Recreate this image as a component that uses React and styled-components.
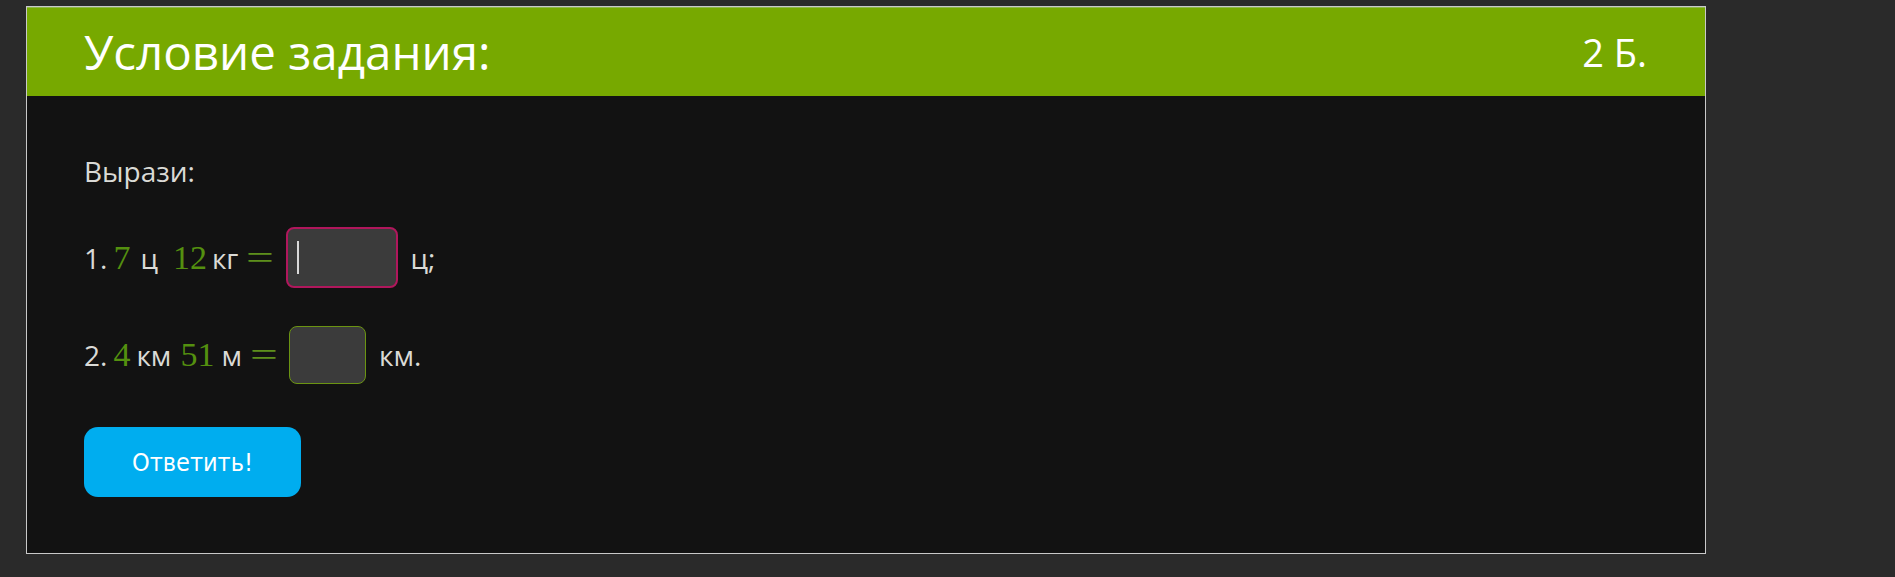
import React from 'react';
import styled, { createGlobalStyle } from 'styled-components';

const GlobalStyle = createGlobalStyle`
    body {
        margin: 0;
        background: #2a2a2a;
        font-family: "Open Sans", "Noto Sans", sans-serif;
    }
`;

const Page = styled.div`
    padding: 6px 0 24px 26px;
`;

const Card = styled.div`
    width: 1680px;
    box-sizing: border-box;
    border: 1px solid #c9c9c9;
    background: #121212;
`;

const Header = styled.div`
    height: 88px;
    padding: 0 58px 0 57px;
    display: flex;
    align-items: center;
    justify-content: space-between;
    background: #77a900;
    color: #ffffff;
    border-top: 1px solid #8fb84a;
`;

const Title = styled.div`
    font-size: 47.5px;
    line-height: 1;
`;

const Points = styled.div`
    font-size: 38px;
    line-height: 1;
`;

const Body = styled.div`
    padding: 54px 57px 56px 57px;
    display: flex;
    flex-direction: column;
    align-items: flex-start;
    color: #dadad6;
    font-size: 28px;
    line-height: 42px;
`;

const Prompt = styled.div`
    margin-bottom: ${props => props.$gap || 0}px;
`;

const Row = styled.div`
    display: flex;
    align-items: center;
    white-space: pre;
    margin-bottom: ${props => props.$gap || 0}px;
`;

const Text = styled.span`
    margin-left: ${props => props.$ml || 0}px;
`;

const Num = styled.span`
    margin-left: ${props => props.$ml || 0}px;
    font-family: "Liberation Serif", "DejaVu Serif", serif;
    font-size: 34px;
    color: #54900f;
`;

const Eq = styled.span`
    display: inline-block;
    width: 28px;
    text-align: center;
    margin-left: ${props => props.$ml || 0}px;
    font-family: "Liberation Serif", "DejaVu Serif", serif;
    font-size: 34px;
    color: #5e8f1c;
    transform: scaleX(1.45);
`;

const AnswerBox = styled.div`
    margin-left: ${props => props.$ml || 0}px;
    width: ${props => props.$w}px;
    height: ${props => props.$h}px;
    box-sizing: border-box;
    border: ${props => props.$focused ? '2px solid #b0175c' : '1.5px solid #6b9412'};
    border-radius: 8px;
    background: #3b3b3b;
    display: flex;
    align-items: center;
    padding-left: 9px;
`;

const Caret = styled.span`
    width: 2px;
    height: 33px;
    background: #d9d9d9;
`;

const SubmitButton = styled.button`
    width: 217px;
    height: 70px;
    border: none;
    border-radius: 14px;
    background: #00adef;
    color: #ffffff;
    font-family: "DejaVu Sans Condensed", "DejaVu Sans", sans-serif;
    font-size: 25px;
    padding: 0;
    cursor: pointer;
`;

export default function App() {
    return (
        <>
            <GlobalStyle />
            <Page>
                <Card>
                    <Header>
                        <Title>Условие задания:</Title>
                        <Points>2 Б.</Points>
                    </Header>
                    <Body>
                        <Prompt $gap={35}>Вырази:</Prompt>

                        <Row $gap={38}>
                            <Text>1.</Text>
                            <Num $ml={6}>7</Num>
                            <Text $ml={10}>ц</Text>
                            <Num $ml={15}>12</Num>
                            <Text $ml={5}>кг</Text>
                            <Eq $ml={8}>=</Eq>
                            <AnswerBox $ml={12} $w={112} $h={61} $focused>
                                <Caret />
                            </AnswerBox>
                            <Text $ml={12}>ц;</Text>
                        </Row>

                        <Row $gap={43}>
                            <Text>2.</Text>
                            <Num $ml={6}>4</Num>
                            <Text $ml={6}>км</Text>
                            <Num $ml={9}>51</Num>
                            <Text $ml={7}>м</Text>
                            <Eq $ml={8}>=</Eq>
                            <AnswerBox $ml={11} $w={77} $h={58} />
                            <Text $ml={13}>км.</Text>
                        </Row>

                        <SubmitButton>Ответить!</SubmitButton>
                    </Body>
                </Card>
            </Page>
        </>
    );
}
